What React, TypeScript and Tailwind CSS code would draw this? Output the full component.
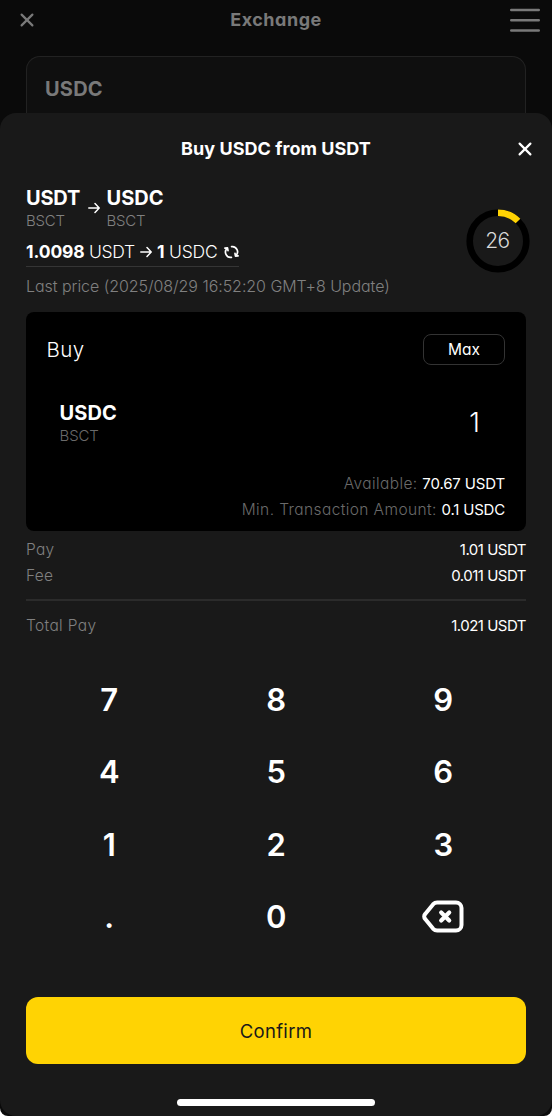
import React from "react";

const XIcon = ({ className }: { className: string }) => (
  <svg className={className} viewBox="0 0 14 14" fill="none" stroke="currentColor" strokeWidth="2.2" strokeLinecap="round">
    <path d="M1.6 1.6 12.4 12.4M12.4 1.6 1.6 12.4" />
  </svg>
);

const Arrow = ({ className }: { className: string }) => (
  <svg className={className} viewBox="0 0 12 12" fill="none" stroke="currentColor" strokeWidth="1.5" strokeLinecap="round" strokeLinejoin="round">
    <path d="M0.8 6H11M7 1.6 11.2 6 7 10.4" />
  </svg>
);

const Refresh = () => (
  <svg className="h-[14px] w-[15px]" viewBox="0 0 15 14" fill="none" stroke="currentColor" strokeWidth="1.7" strokeLinecap="round" strokeLinejoin="round">
    <path d="M7.4 12.400A5.200 5.200 0 0 1 3.2 3.4M0.9 3.1 3.5 2.9 4 5.6" />
    <path d="M7.6 1.600A5.200 5.200 0 0 1 11.8 10.6M14.1 10.9 11.5 11.1 11 8.4" />
  </svg>
);

const Backspace = () => (
  <svg className="h-[34px] w-[42px]" viewBox="0 0 42 34" fill="none" stroke="currentColor" strokeLinecap="round" strokeLinejoin="round">
    <path strokeWidth="4" d="M15.2 2.500H34a5.5 5.5 0 0 1 5.500 5.500V25A5.500 5.500 0 0 1 34 30.500H15.200a5.500 5.500 0 0 1-4-1.700L3.200 19a3.600 3.600 0 0 1 0-5L11.200 4.200a5.500 5.500 0 0 1 4-1.700Z" />
    <path strokeWidth="4.200" d="M19.200 12.500 27.200 20.500M27.200 12.500 19.200 20.500" />
  </svg>
);

const keys = ["7", "8", "9", "4", "5", "6", "1", "2", "3", ".", "0", "back"];

const fees = [
  { label: "Pay", value: "1.01 USDT" },
  { label: "Fee", value: "0.011 USDT" },
];

export default function App() {
  return (
    <div className="h-[1116px] w-[552px] bg-white font-['Inter',sans-serif] text-white [font-feature-settings:'cv11']">
      <div className="h-full overflow-hidden rounded-b-[8px] bg-[#0a0a0a]">
        <div className="flex h-[140px] flex-col text-[#797979]">
          <header className="flex h-[40px] items-center justify-between pr-[12px] pl-[20px]">
            <XIcon className="h-[14px] w-[14px]" />
            <h1 className="pl-[8px] text-[18px] leading-[24px] font-bold tracking-[0.5px]">Exchange</h1>
            <svg className="h-[24px] w-[30px]" viewBox="0 0 30 24" stroke="currentColor" strokeWidth="2.400" strokeLinecap="round">
              <path d="M1.200 2H28.800M1.200 12.300H28.800M1.200 22.500H28.800" />
            </svg>
          </header>
          <div className="mx-[26px] mt-[16px] flex-1 rounded-t-[14px] border border-b-0 border-[#222] bg-[#0f0f0f] px-[18px] pt-[20px]">
            <span className="text-[20px] leading-[24px] font-bold tracking-[0.2px]">USDC</span>
          </div>
        </div>

        <section className="relative -mt-[27px] flex h-[1003px] flex-col rounded-[16px] bg-[#191919] px-[26px]">
          <div className="flex h-[72px] items-center justify-between">
            <span className="w-[8px]" />
            <h2 className="text-[18px] leading-[24px] font-bold tracking-[0.050px]">Buy USDC from USDT</h2>
            <XIcon className="-mr-[6px] h-[14px] w-[14px]" />
          </div>

          <div className="flex h-[127px] justify-between">
            <div className="flex flex-col items-start pt-[2px]">
              <div className="flex items-center">
                <div className="flex w-[54px] flex-col">
                  <b className="text-[20px] leading-[23px] tracking-[-0.2px]">USDT</b>
                  <span className="text-[15px] leading-[22px] font-light tracking-[-0.2px] text-[#808080]">BSCT</span>
                </div>
                <Arrow className="mr-[7px] mb-[4px] ml-[7.500px] h-[12px] w-[12px]" />
                <div className="flex flex-col">
                  <b className="text-[20px] leading-[23px]">USDC</b>
                  <span className="text-[15px] leading-[22px] font-light tracking-[-0.2px] text-[#808080]">BSCT</span>
                </div>
              </div>
              <div className="mt-[6px] flex h-[29px] w-[213px] items-center border-b border-[#353535] text-[17.500px] leading-[24px] font-light">
                <span className="w-[63px] font-bold tracking-[-0.1px]">1.0098</span>
                <span className="w-[51px] tracking-[-0.3px]">USDT</span>
                <Arrow className="h-[12px] w-[12px]" />
                <span className="ml-[5px] w-[12px] font-bold">1</span>
                <span className="w-[55px] tracking-[-0.2px]">USDC</span>
                <Refresh />
              </div>
              <p className="mt-[7px] text-[16px] leading-[24px] font-light tracking-[-0.050px] text-[#808080]">Last price (2025/08/29 16:52:20 GMT+8 Update)</p>
            </div>
            <div className="-mr-[3.500px] mt-[23.500px] grid h-[64px] w-[64px] place-items-center">
              <svg className="col-start-1 row-start-1 h-[64px] w-[64px] -rotate-90" viewBox="0 0 64 64" fill="none" strokeWidth="6.600">
                <circle cx="32" cy="32" r="28.300" stroke="#000" />
                <circle cx="32" cy="32" r="28.300" stroke="#ffd303" pathLength="360" strokeDasharray="45 315" />
              </svg>
              <span className="col-start-1 row-start-1 text-[21px] leading-[24px] font-light tracking-[-0.5px] text-[#d8d8d8]">26</span>
            </div>
          </div>

          <div className="flex h-[219px] shrink-0 flex-col rounded-[8px] bg-black px-[21px] pt-[22px]">
            <div className="flex items-center justify-between">
              <span className="-ml-[0.500px] pt-[1px] text-[20.500px] leading-[24px] font-light tracking-[0.4px]">Buy</span>
              <button className="h-[31px] w-[82px] rounded-[8px] border border-[#333] pt-[1px] text-[15.500px] leading-[24px]">Max</button>
            </div>
            <div className="mt-[37px] flex items-center justify-between pr-[26px] pl-[12.500px]">
              <div className="flex flex-col">
                <b className="text-[20px] leading-[23px] tracking-[0.1px]">USDC</b>
                <span className="text-[15px] leading-[22px] font-light tracking-[-0.1px] text-[#6a6a6a]">BSCT</span>
              </div>
              <span className="-mr-[1px] mb-[4px] text-[27px] leading-[30px] font-light">1</span>
            </div>
            <div className="mt-[24px] flex flex-col items-end text-[15.500px] leading-[26px] font-light tracking-[0.400px] text-[#6a6a6a]">
              <p>Available: <span className="text-[15px] font-normal tracking-[-0.150px] text-white">70.67 USDT</span></p>
              <p>Min. Transaction Amount: <span className="text-[15px] font-normal tracking-[-0.2px] text-white">0.1 USDC</span></p>
            </div>
          </div>

          <div className="pt-[6px] text-[15.500px] leading-[26px] font-light">
            {fees.map((f) => (
              <div key={f.label} className="flex justify-between">
                <span className="tracking-[0.3px] text-[#808080]">{f.label}</span>
                <span className="text-[15px] font-normal tracking-[-0.5px]">{f.value}</span>
              </div>
            ))}
            <div className="mt-[10px] flex justify-between border-t-2 border-[#2b2b2b] pt-[12px]">
              <span className="tracking-[0.350px] text-[#808080]">Total Pay</span>
              <span className="text-[15px] font-normal tracking-[-0.5px]">1.021 USDT</span>
            </div>
          </div>

          <div className="-mx-[0.500px] mt-[24px] grid grid-cols-3">
            {keys.map((k) => (
              <button key={k} className="flex h-[72.500px] items-center justify-center text-[31px] leading-none font-semibold tracking-[-0.5px]">
                {k === "back" ? <Backspace /> : k}
              </button>
            ))}
          </div>

          <button className="mt-[44px] h-[67px] shrink-0 rounded-[12px] bg-[#ffd303] text-[18.500px] leading-[24px] tracking-[0.3px] text-[#191919]">Confirm</button>
          <div className="mx-auto mt-[35px] h-[6.500px] w-[198px] shrink-0 rounded-full bg-white" />
        </section>
      </div>
    </div>
  );
}
